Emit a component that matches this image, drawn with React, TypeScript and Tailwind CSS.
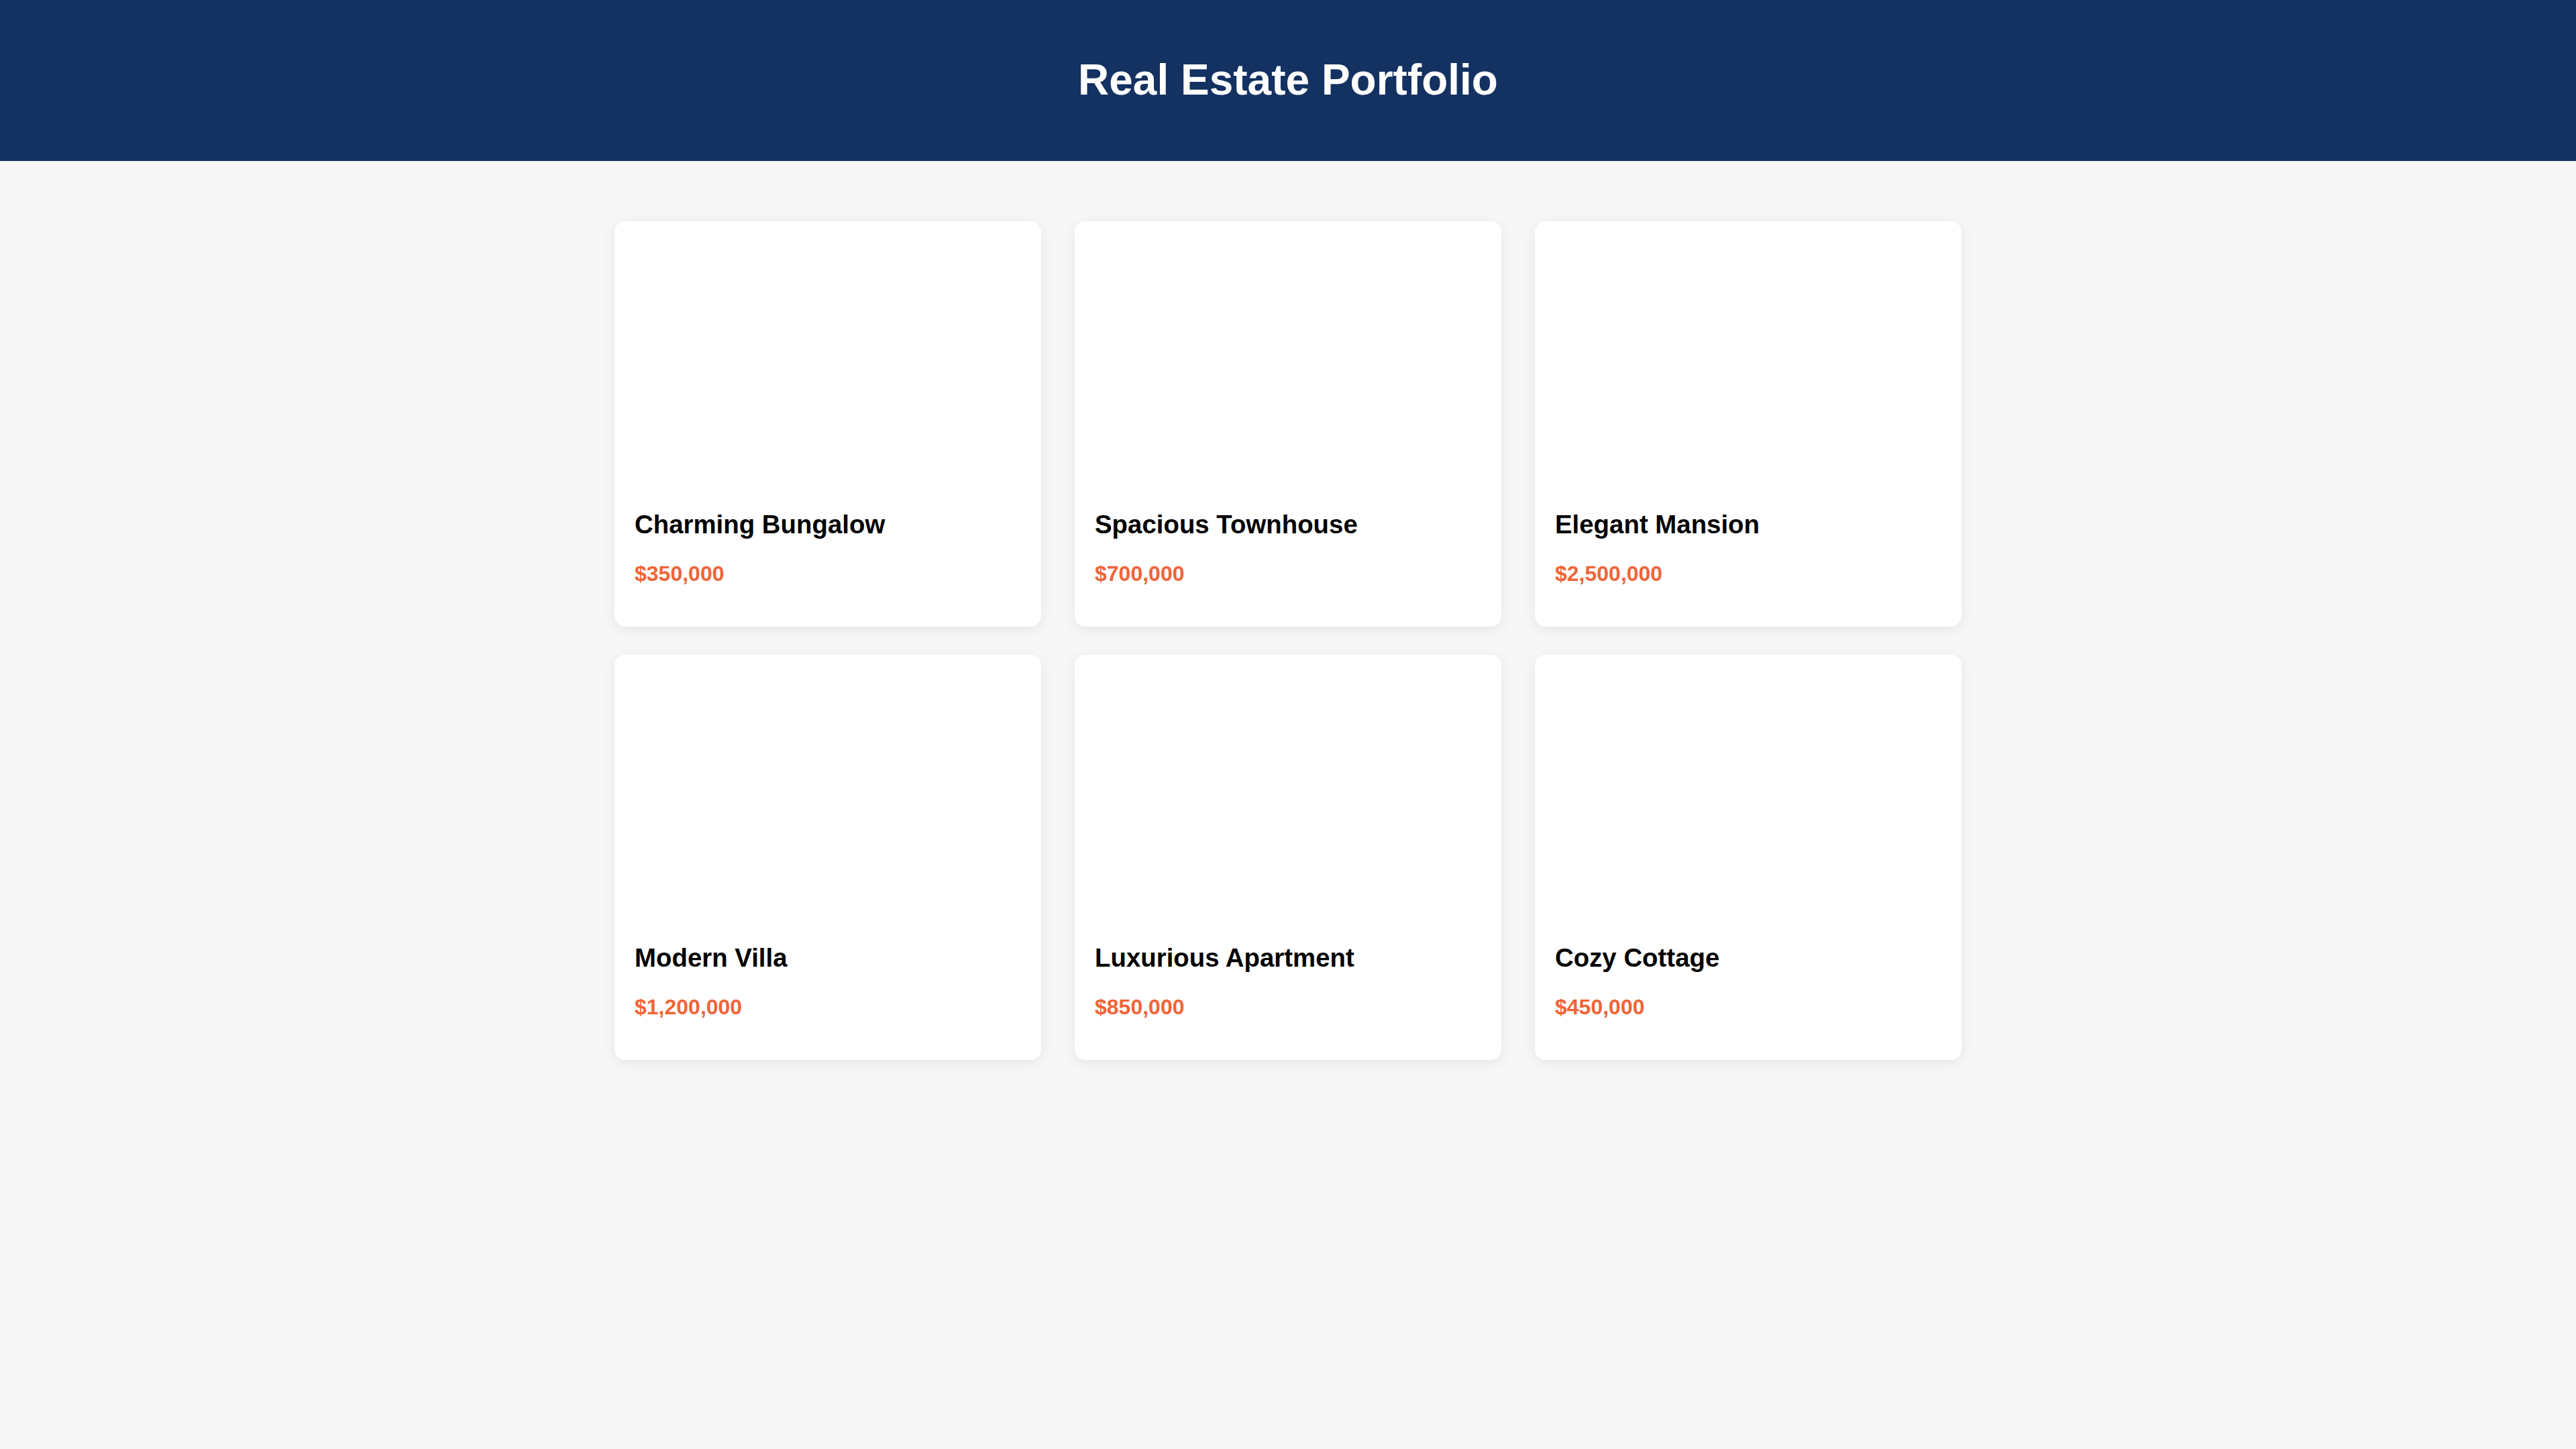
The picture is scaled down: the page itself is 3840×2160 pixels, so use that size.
import React from "react";

const properties = [
  { name: "Charming Bungalow", price: "$350,000" },
  { name: "Spacious Townhouse", price: "$700,000" },
  { name: "Elegant Mansion", price: "$2,500,000" },
  { name: "Modern Villa", price: "$1,200,000" },
  { name: "Luxurious Apartment", price: "$850,000" },
  { name: "Cozy Cottage", price: "$450,000" },
];

export default function App() {
  return (
    <div className="min-h-screen bg-[#f7f7f7] font-['Liberation_Sans',Arial,sans-serif]">
      <header className="h-[240px] bg-[#133161] flex items-center justify-center">
        <h1 className="text-[64px] leading-[73.6px] font-bold text-white">Real Estate Portfolio</h1>
      </header>
      <main className="pt-[90px]">
        <div className="w-[2008px] mx-auto grid grid-cols-3 gap-x-[50px] gap-y-[42px]">
          {properties.map((p) => (
            <div
              key={p.name}
              className="bg-white rounded-[16px] shadow-[0_4px_20px_rgba(0,0,0,0.08)] flex flex-col overflow-hidden"
            >
              <div className="h-[400px] bg-white" />
              <div className="pt-[30px] px-[30px] pb-[60px]">
                <h3 className="text-[38.4px] leading-[44px] font-bold text-black">{p.name}</h3>
                <p className="mt-[33px] text-[32px] leading-[37px] font-bold text-[#f06438]">{p.price}</p>
              </div>
            </div>
          ))}
        </div>
      </main>
    </div>
  );
}
